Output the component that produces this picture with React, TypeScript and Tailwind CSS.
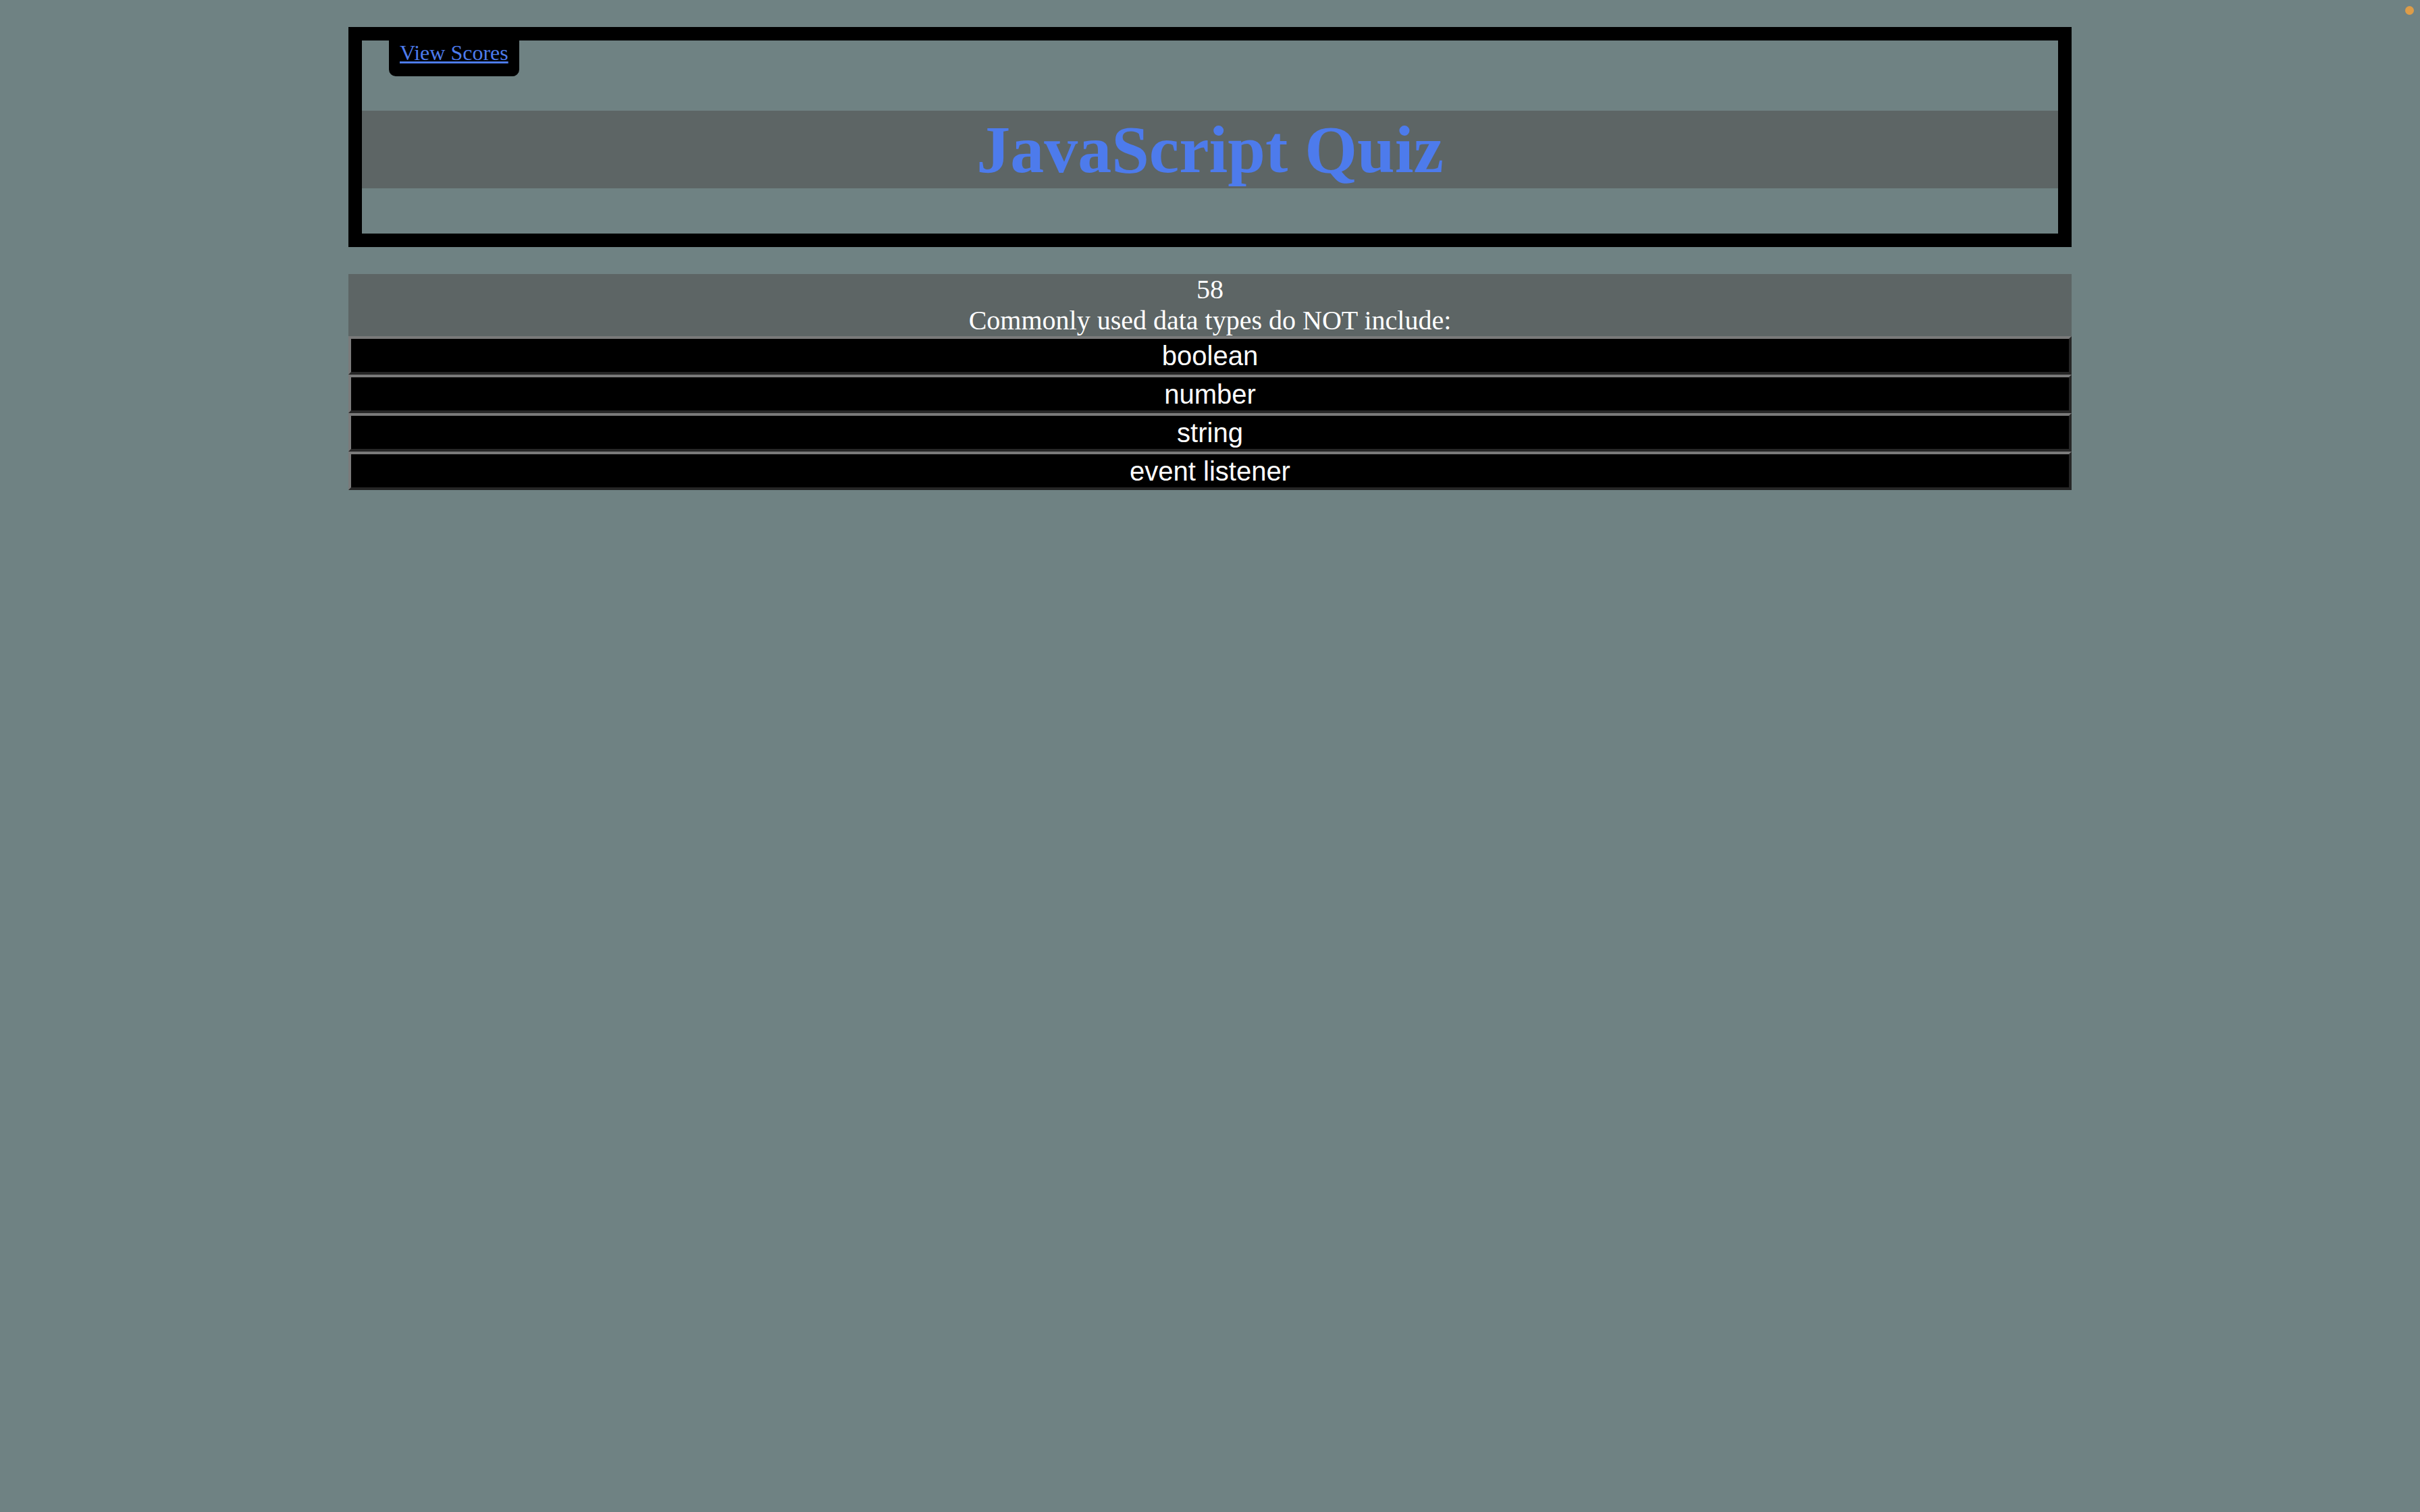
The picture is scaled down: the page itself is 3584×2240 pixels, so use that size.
import React from "react";

const serif = "font-['Liberation_Serif','Times_New_Roman',serif]";
const sans = "font-['Liberation_Sans',Arial,sans-serif]";

const answers = ["boolean", "number", "string", "event listener"];

export default function App() {
  return (
    <div className="relative min-h-screen bg-[#6f8283] pt-10">
      {/* recording dot in the corner */}
      <span className="absolute right-[9px] top-[9px] h-[13px] w-[13px] rounded-full bg-[#dd9c48]" />

      {/* Header */}
      <header className="mx-auto w-[2552px] border-[20px] border-black">
        <div className="flex h-[104px] items-start pl-10">
          <div className="rounded-b-[10px] bg-black px-4 pb-4">
            <a href="#" className={`${serif} text-[32px] leading-[37px] text-[#4d7bec] underline`}>
              View Scores
            </a>
          </div>
        </div>
        <h1
          className={`${serif} h-[115px] bg-[#5d6565] text-center text-[100px] font-bold leading-[115px] text-[#4d7bec]`}
        >
          JavaScript Quiz
        </h1>
        <div className="h-[67px]" />
      </header>

      {/* Question */}
      <main className="mx-auto mt-10 w-[2552px]">
        <div className={`${serif} bg-[#5d6565] text-center text-[40px] leading-[46px] text-white`}>
          <div>58</div>
          <div>Commonly used data types do NOT include:</div>
        </div>
        <div className="flex flex-col">
          {answers.map((a) => (
            <button
              key={a}
              className={`${sans} flex h-[57px] w-full items-center justify-center border-4 border-t-[#7a7a7a] border-l-[#7a7a7a] border-b-[#262626] border-r-[#262626] bg-black text-[40px] leading-[46px] text-white`}
            >
              {a}
            </button>
          ))}
        </div>
      </main>
    </div>
  );
}
